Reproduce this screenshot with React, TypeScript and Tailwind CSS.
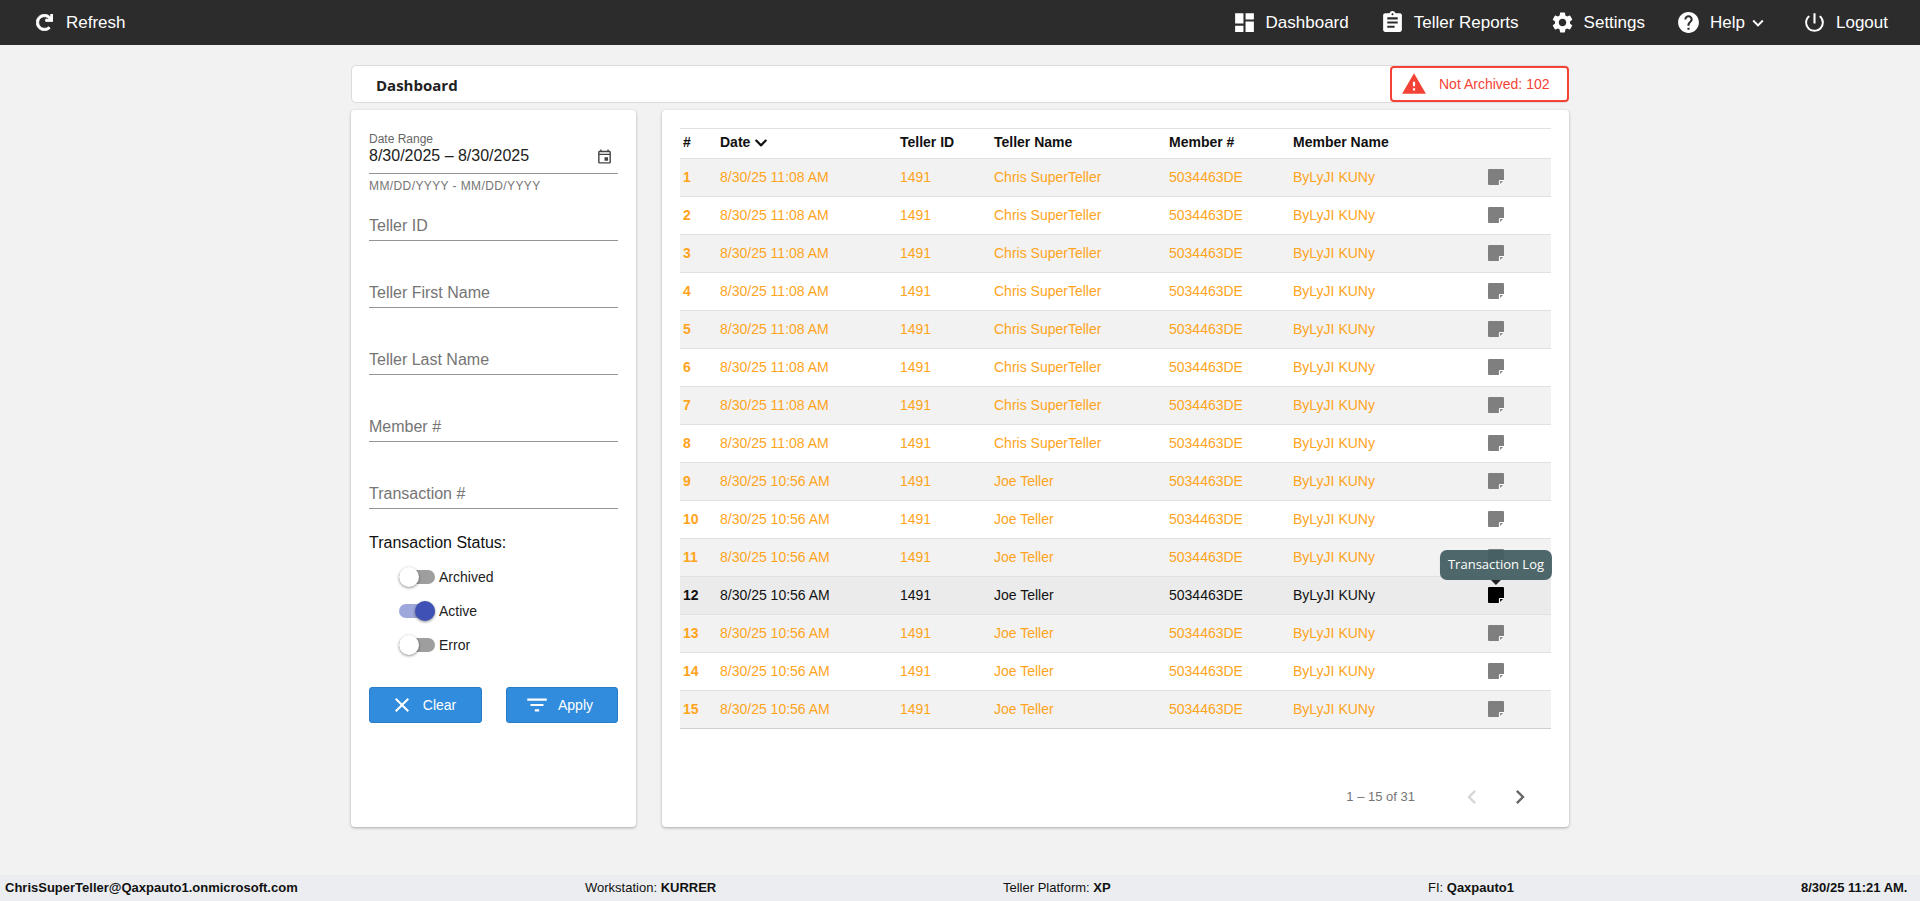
import React from "react";
import { MdDashboard, MdAssignment, MdSettings, MdHelp, MdPowerSettingsNew, MdKeyboardArrowDown, MdClose, MdFilterList, MdWarning, MdOutlineEvent, MdChevronLeft, MdChevronRight } from "react-icons/md";
import { FaRedo, FaChevronDown } from "react-icons/fa";

const NoteIcon = ({ active }: { active: boolean }) => (
  <svg width="16" height="16" viewBox="0 0 16 16" className="block">
    <path d="M0 1a1 1 0 0 1 1-1h14a1 1 0 0 1 1 1v10l-5 5H1a1 1 0 0 1-1-1z" fill={active ? "#000" : "#7f7f7f"} />
    <path d="M11.5 16v-4a.5.5 0 0 1 .5-.5h4" fill="none" stroke="#fff" strokeWidth="1.2" />
  </svg>
);

const rows = Array.from({ length: 15 }, (_, i) => ({
  n: i + 1,
  date: i < 8 ? "8/30/25 11:08 AM" : "8/30/25 10:56 AM",
  name: i < 8 ? "Chris SuperTeller" : "Joe Teller",
}));

const NavItem = ({ icon, label, extra }: { icon: React.ReactNode; label: string; extra?: React.ReactNode }) => (
  <div className="flex items-center gap-[9px] text-white text-[17px]">
    {icon}
    <span>{label}</span>
    {extra}
  </div>
);

const Field = ({ label }: { label: string }) => (
  <div className="h-[67px] flex flex-col justify-end">
    <div className="h-[30px] flex items-center text-[16px] text-[#757575] border-b border-[#949494]">{label}</div>
  </div>
);

const Toggle = ({ on, label }: { on: boolean; label: string }) => (
  <div className="h-[34px] flex items-center pl-[30px]">
    <div className={"relative w-[36px] h-[14px] rounded-full shrink-0 " + (on ? "bg-[#9fa8da]" : "bg-[#9e9e9e]")}>
      <div className={"absolute -top-[3px] w-[20px] h-[20px] rounded-full shadow-[0_1px_3px_rgba(0,0,0,0.45)] " + (on ? "left-[16px] bg-[#3f51b5]" : "left-0 bg-white")} />
    </div>
    <span className="ml-[4px] text-[14px] text-[#212121]">{label}</span>
  </div>
);

export default function App() {
  return (
    <div className="h-[901px] flex flex-col bg-[#f2f2f2] font-['Liberation_Sans',Arial,sans-serif] overflow-hidden">
      <header className="h-[45px] shrink-0 bg-[#2c2c2c] flex items-center justify-between pl-[36px] pr-[32px]">
        <div className="flex items-center gap-[13px] text-white text-[17px]">
          <FaRedo size={17} stroke="currentColor" strokeWidth={24} />
          <span>Refresh</span>
        </div>
        <div className="flex items-center gap-[31px]">
          <NavItem icon={<MdDashboard size={25} />} label="Dashboard" />
          <NavItem icon={<MdAssignment size={25} />} label="Teller Reports" />
          <NavItem icon={<MdSettings size={25} />} label="Settings" />
          <div className="mr-[2px]">
            <NavItem icon={<MdHelp size={25} />} label="Help" extra={<MdKeyboardArrowDown size={22} className="-ml-[7px]" />} />
          </div>
          <NavItem icon={<MdPowerSettingsNew size={25} />} label="Logout" />
        </div>
      </header>

      <main className="flex-1 w-[1218px] mx-auto pt-[20px] flex flex-col">
        <div className="relative h-[38px] bg-white rounded-[5px] border border-[#dcdcdc] flex items-center pl-[24px] pt-[3px]">
          <span className="text-[15px] font-bold text-[#212121] font-['Open_Sans',sans-serif]">Dashboard</span>
          <div className="absolute -right-px top-0 h-[36px] w-[179px] bg-white border-2 border-[#f44336] rounded-[4px] flex items-center pl-[9px] gap-[12px] text-[14px] text-[#f44336]">
            <MdWarning size={26} />
            <span>Not Archived: 102</span>
          </div>
        </div>

        <div className="flex gap-[26px] mt-[7px] h-[717px]">
          <aside className="w-[285px] bg-white rounded-[4px] shadow-[0_1px_3px_rgba(0,0,0,0.3)] px-[18px] pt-[22px]">
            <div className="text-[12px] leading-[14px] text-[#666]">Date Range</div>
            <div className="h-[28px] flex items-center justify-between border-b border-[#949494] pb-[7px]">
              <span className="text-[16px] text-[#212121]">8/30/2025 – 8/30/2025</span>
              <MdOutlineEvent size={17} className="text-[#444] mr-[5px]" />
            </div>
            <div className="text-[12px] mt-[5px] text-[#757575] tracking-[0.4px] leading-[14px]">MM/DD/YYYY - MM/DD/YYYY</div>
            <div className="-mt-[19px]">
              <Field label="Teller ID" />
              <Field label="Teller First Name" />
              <Field label="Teller Last Name" />
              <Field label="Member #" />
              <Field label="Transaction #" />
            </div>
            <div className="mt-[25px] text-[16px] text-[#111] leading-[18px]">Transaction Status:</div>
            <div className="mt-[8px]">
              <Toggle on={false} label="Archived" />
              <Toggle on={true} label="Active" />
              <Toggle on={false} label="Error" />
            </div>
            <div className="mt-[25px] flex justify-between">
              <button className="w-[113px] h-[36px] bg-[#318cdd] border border-[#2a7cc4] rounded-[3px] text-white text-[14px] flex items-center justify-center gap-[9px] pr-[5px]">
                <MdClose size={24} />
                <span>Clear</span>
              </button>
              <button className="w-[112px] h-[36px] bg-[#318cdd] border border-[#2a7cc4] rounded-[3px] text-white text-[14px] flex items-center justify-center gap-[8px] pr-[7px]">
                <MdFilterList size={26} />
                <span>Apply</span>
              </button>
            </div>
          </aside>

          <section className="relative w-[907px] bg-white rounded-[4px] shadow-[0_1px_3px_rgba(0,0,0,0.3)] px-[18px] pt-[18px]">
            <table className="w-[871px] border-collapse table-fixed text-[14px]">
              <colgroup>
                <col className="w-[40px]" />
                <col className="w-[180px]" />
                <col className="w-[94px]" />
                <col className="w-[175px]" />
                <col className="w-[124px]" />
                <col className="w-[186px]" />
                <col />
              </colgroup>
              <thead>
                <tr className="h-[30px] border-y border-[#e0e0e6] text-[#111] font-bold text-left">
                  <th className="pl-[3px] pb-[2px] font-bold">#</th>
                  <th className="pb-[2px] font-bold"><span className="inline-flex items-center gap-[4px]">Date <FaChevronDown size={14} /></span></th>
                  <th className="pb-[2px] font-bold">Teller ID</th>
                  <th className="pb-[2px] font-bold">Teller Name</th>
                  <th className="pb-[2px] font-bold">Member #</th>
                  <th className="pb-[2px] font-bold">Member Name</th>
                  <th />
                </tr>
              </thead>
              <tbody>
                {rows.map((r) => {
                  const active = r.n === 12;
                  const stripe = r.n % 2 === 1;
                  return (
                    <tr key={r.n} className={"h-[38px] border-b " + (r.n === 15 ? "border-[#cfcfcf] " : "border-[#e0e0e6] ") + (active ? "bg-[#ebebeb] text-[#111]" : (stripe ? "bg-[#f2f2f2] " : "bg-white ") + "text-[#ffa41c]")}>
                      <td className="pl-[3px] font-bold">{r.n}</td>
                      <td>{r.date}</td>
                      <td>1491</td>
                      <td>{r.name}</td>
                      <td>5034463DE</td>
                      <td>ByLyJI KUNy</td>
                      <td className="pl-[9px] pb-[2px]">
                        <div className="relative w-[16px]">
                          <NoteIcon active={active} />
                          {active && (
                            <div className="absolute left-1/2 -translate-x-1/2 -top-[37px] h-[30px] px-[8px] flex items-center whitespace-nowrap rounded-[7px] bg-[#455f62]/95 text-white text-[13px] font-['Open_Sans',sans-serif]">
                              Transaction Log
                              <div className="absolute left-1/2 -translate-x-1/2 top-full w-0 h-0 border-x-[5px] border-x-transparent border-t-[5px] border-t-[#222]" />
                            </div>
                          )}
                        </div>
                      </td>
                    </tr>
                  );
                })}
              </tbody>
            </table>
            <div className="absolute right-[35px] top-[673px] flex items-center text-[13px] text-[#757575]">
              <span>1 – 15 of 31</span>
              <MdChevronLeft size={28} className="ml-[43px] text-[#d6d6d6]" />
              <MdChevronRight size={28} className="ml-[20px] text-[#666]" />
            </div>
          </section>
        </div>
      </main>

      <footer className="h-[26px] shrink-0 bg-[#ebedf0] flex items-center pl-[5px] text-[13px] text-[#111]">
        <b className="w-[580px] shrink-0">ChrisSuperTeller@Qaxpauto1.onmicrosoft.com</b>
        <span className="w-[418px] shrink-0">Workstation: <b>KURRER</b></span>
        <span className="w-[425px] shrink-0">Teller Platform: <b>XP</b></span>
        <span className="w-[373px] shrink-0">FI: <b>Qaxpauto1</b></span>
        <b>8/30/25 11:21 AM.</b>
      </footer>
    </div>
  );
}
